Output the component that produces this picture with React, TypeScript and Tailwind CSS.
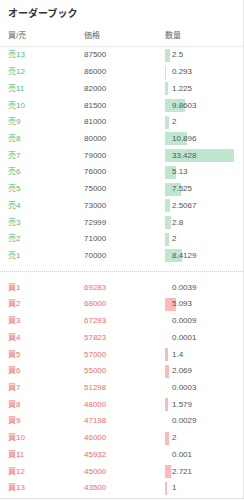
const asks = [
  { label: '売13', price: '87500', qty: '2.5' },
  { label: '売12', price: '86000', qty: '0.293' },
  { label: '売11', price: '82000', qty: '1.225' },
  { label: '売10', price: '81500', qty: '9.8603' },
  { label: '売9', price: '81000', qty: '2' },
  { label: '売8', price: '80000', qty: '10.896' },
  { label: '売7', price: '79000', qty: '33.428' },
  { label: '売6', price: '76000', qty: '5.13' },
  { label: '売5', price: '75000', qty: '7.525' },
  { label: '売4', price: '73000', qty: '2.5067' },
  { label: '売3', price: '72999', qty: '2.8' },
  { label: '売2', price: '71000', qty: '2' },
  { label: '売1', price: '70000', qty: '8.4129' },
];

const bids = [
  { label: '買1', price: '69283', qty: '0.0039' },
  { label: '買2', price: '68000', qty: '5.093' },
  { label: '買3', price: '67293', qty: '0.0009' },
  { label: '買4', price: '57823', qty: '0.0001' },
  { label: '買5', price: '57000', qty: '1.4' },
  { label: '買6', price: '55000', qty: '2.069' },
  { label: '買7', price: '51298', qty: '0.0003' },
  { label: '買8', price: '48000', qty: '1.579' },
  { label: '買9', price: '47198', qty: '0.0029' },
  { label: '買10', price: '46000', qty: '2' },
  { label: '買11', price: '45932', qty: '0.001' },
  { label: '買12', price: '45000', qty: '2.721' },
  { label: '買13', price: '43500', qty: '1' },
];

const maxQty = 33.428;
const barMax = 69;

interface Order {
  label: string;
  price: string;
  qty: string;
}

function Row({ order, side }: { order: Order; side: 'ask' | 'bid' }) {
  const width = (parseFloat(order.qty) / maxQty) * barMax;
  return (
    <div className="flex h-[16.72px] items-center pl-2 text-[8px]">
      <div className={`w-[76px] ${side === 'ask' ? 'text-[#4fbf78]' : 'text-[#f46b6b]'}`}>
        {order.label}
      </div>
      <div className={`w-[81px] ${side === 'ask' ? 'text-[#555]' : 'text-[#f46b6b]'}`}>
        {order.price}
      </div>
      <div className="relative flex h-[13px] flex-1 items-center">
        <div
          className={`absolute left-0 top-0 h-full ${side === 'ask' ? 'bg-[#bfe7d0]' : 'bg-[#fbb9b9]'}`}
          style={{ width: `${width}px` }}
        />
        <span className="relative pl-[7px] text-[#555]">{order.qty}</span>
      </div>
    </div>
  );
}

export default function App() {
  return (
    <div
      className="h-[499px] w-[244px] border-r border-b border-[#e3e3e3] bg-white"
      style={{ fontFamily: '"Liberation Sans", "Noto Sans CJK JP", sans-serif' }}
    >
      <div className="flex h-[26px] items-center pl-2 text-[10px] font-bold text-[#333]">
        オーダーブック
      </div>
      <div className="flex h-[21px] items-center border-b border-[#ececec] pl-2 text-[8px] text-[#666]">
        <div className="w-[76px]">買/売</div>
        <div className="w-[81px]">価格</div>
        <div className="flex-1">数量</div>
      </div>

      {/* 売り注文 */}
      <div>
        {asks.map((o) => (
          <Row key={o.label} order={o} side="ask" />
        ))}
      </div>

      <div className="py-[7px]">
        <div className="border-t border-dotted border-[#cfcfcf]" />
      </div>

      {/* 買い注文 */}
      <div>
        {bids.map((o) => (
          <Row key={o.label} order={o} side="bid" />
        ))}
      </div>
    </div>
  );
}
